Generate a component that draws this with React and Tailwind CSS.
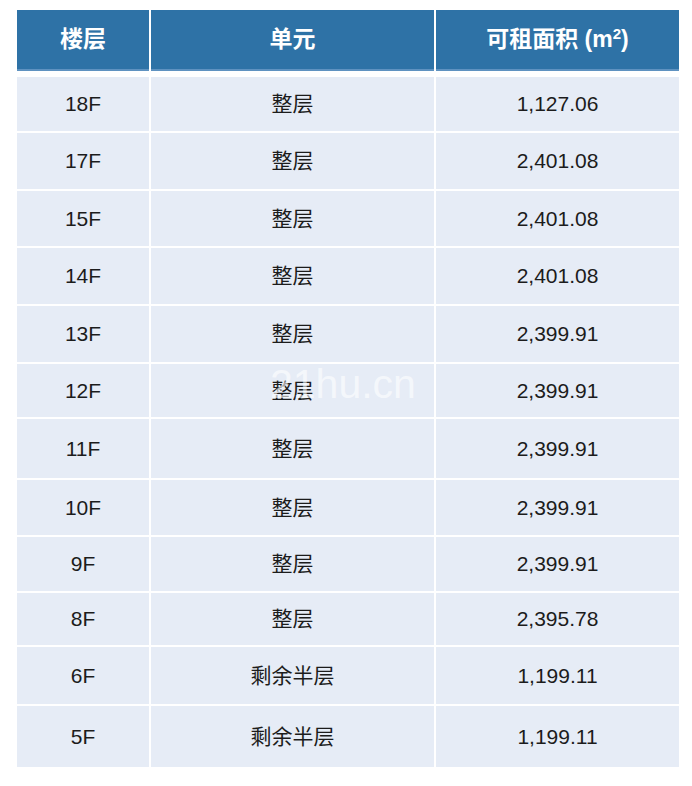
import React from "react";

const rows = [
  { f: "18F", u: "整层", a: "1,127.06", h: "h-[54px]" },
  { f: "17F", u: "整层", a: "2,401.08", h: "h-[56px]" },
  { f: "15F", u: "整层", a: "2,401.08", h: "h-[55px]" },
  { f: "14F", u: "整层", a: "2,401.08", h: "h-[56px]" },
  { f: "13F", u: "整层", a: "2,399.91", h: "h-[56px]" },
  { f: "12F", u: "整层", a: "2,399.91", h: "h-[53px]" },
  { f: "11F", u: "整层", a: "2,399.91", h: "h-[59px]" },
  { f: "10F", u: "整层", a: "2,399.91", h: "h-[55px]" },
  { f: "9F", u: "整层", a: "2,399.91", h: "h-[54px]" },
  { f: "8F", u: "整层", a: "2,395.78", h: "h-[52px]" },
  { f: "6F", u: "剩余半层", a: "1,199.11", h: "h-[57px]" },
  { f: "5F", u: "剩余半层", a: "1,199.11", h: "h-[61px]" },
];

const font = "font-['Liberation_Sans','Noto_Sans_CJK_SC',sans-serif]";

export default function App() {
  return (
    <div className={`relative w-[692px] h-[786px] bg-white pl-[17px] pt-[10px] ${font}`}>
      <div className="grid grid-cols-[132px_283px_243px] gap-x-[2px]">
        {["楼层", "单元"].map((t) => (
          <div
            key={t}
            className="h-[61px] bg-[#2e72a6] border-b-2 border-[#5f92c0] flex items-center justify-center text-white font-bold text-[23px]"
          >
            {t}
          </div>
        ))}
        <div className="h-[61px] bg-[#2e72a6] border-b-2 border-[#5f92c0] flex items-center justify-center text-white font-bold text-[23px]">
          <span>
            可租面积 (m<sup className="text-[15px] relative top-[-8px]">2</sup>)
          </span>
        </div>
      </div>
      <div className="mt-[6px] flex flex-col gap-y-[2px]">
        {rows.map((r, i) => (
          <div key={i} className="grid grid-cols-[132px_283px_243px] gap-x-[2px]">
            <div className={`${r.h} bg-[#e6ecf6] flex items-center justify-center text-[#1c1c1c] text-[21px]`}>{r.f}</div>
            <div className={`${r.h} bg-[#e6ecf6] flex items-center justify-center text-[#1c1c1c] text-[21px]`}>{r.u}</div>
            <div className={`${r.h} bg-[#e6ecf6] flex items-center justify-center text-[#1c1c1c] text-[21px]`}>{r.a}</div>
          </div>
        ))}
      </div>
      <div className="absolute left-[270px] top-[364px] text-[41px] leading-none text-white/60 font-['Liberation_Sans',sans-serif] pointer-events-none">
        21hu.cn
      </div>
    </div>
  );
}
